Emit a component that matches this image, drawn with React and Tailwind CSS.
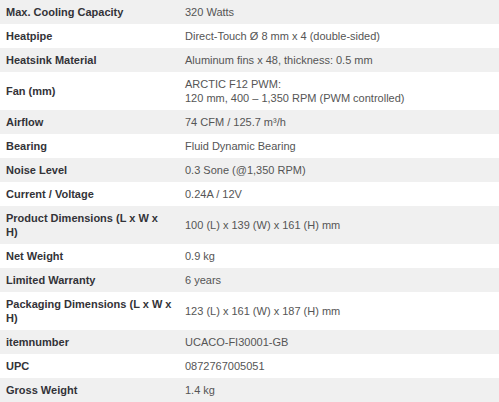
import React from "react";

const rows = [
  [["Max. Cooling Capacity"], ["320 Watts"]],
  [["Heatpipe"], ["Direct-Touch Ø 8 mm x 4 (double-sided)"]],
  [["Heatsink Material"], ["Aluminum fins x 48, thickness: 0.5 mm"]],
  [["Fan (mm)"], ["ARCTIC F12 PWM:", "120 mm, 400 – 1,350 RPM (PWM controlled)"]],
  [["Airflow"], ["74 CFM / 125.7 m³/h"]],
  [["Bearing"], ["Fluid Dynamic Bearing"]],
  [["Noise Level"], ["0.3 Sone (@1,350 RPM)"]],
  [["Current / Voltage"], ["0.24A / 12V"]],
  [["Product Dimensions (L x W x", "H)"], ["100 (L) x 139 (W) x 161 (H) mm"]],
  [["Net Weight"], ["0.9 kg"]],
  [["Limited Warranty"], ["6 years"]],
  [["Packaging Dimensions (L x W x", "H)"], ["123 (L) x 161 (W) x 187 (H) mm"]],
  [["itemnumber"], ["UCACO-FI30001-GB"]],
  [["UPC"], ["0872767005051"]],
  [["Gross Weight"], ["1.4 kg"]],
];

export default function App() {
  return (
    <div
      className="w-[499px] text-[11px] leading-[14px]"
      style={{ fontFamily: '"Liberation Sans", Arial, sans-serif' }}
    >
      {rows.map(([label, values], i) => (
        <div
          key={label[0]}
          className={`flex items-center ${i % 2 === 0 ? "bg-[#f0f0f0]" : "bg-white"}`}
        >
          <div className="w-[179px] shrink-0 px-[6px] py-[5px] font-bold text-[#333338]">
            {label.map((l) => (
              <div key={l}>{l}</div>
            ))}
          </div>
          <div className="flex-1 px-[6px] py-[5px] text-[#555555]">
            {values.map((v) => (
              <div key={v}>{v}</div>
            ))}
          </div>
        </div>
      ))}
    </div>
  );
}
